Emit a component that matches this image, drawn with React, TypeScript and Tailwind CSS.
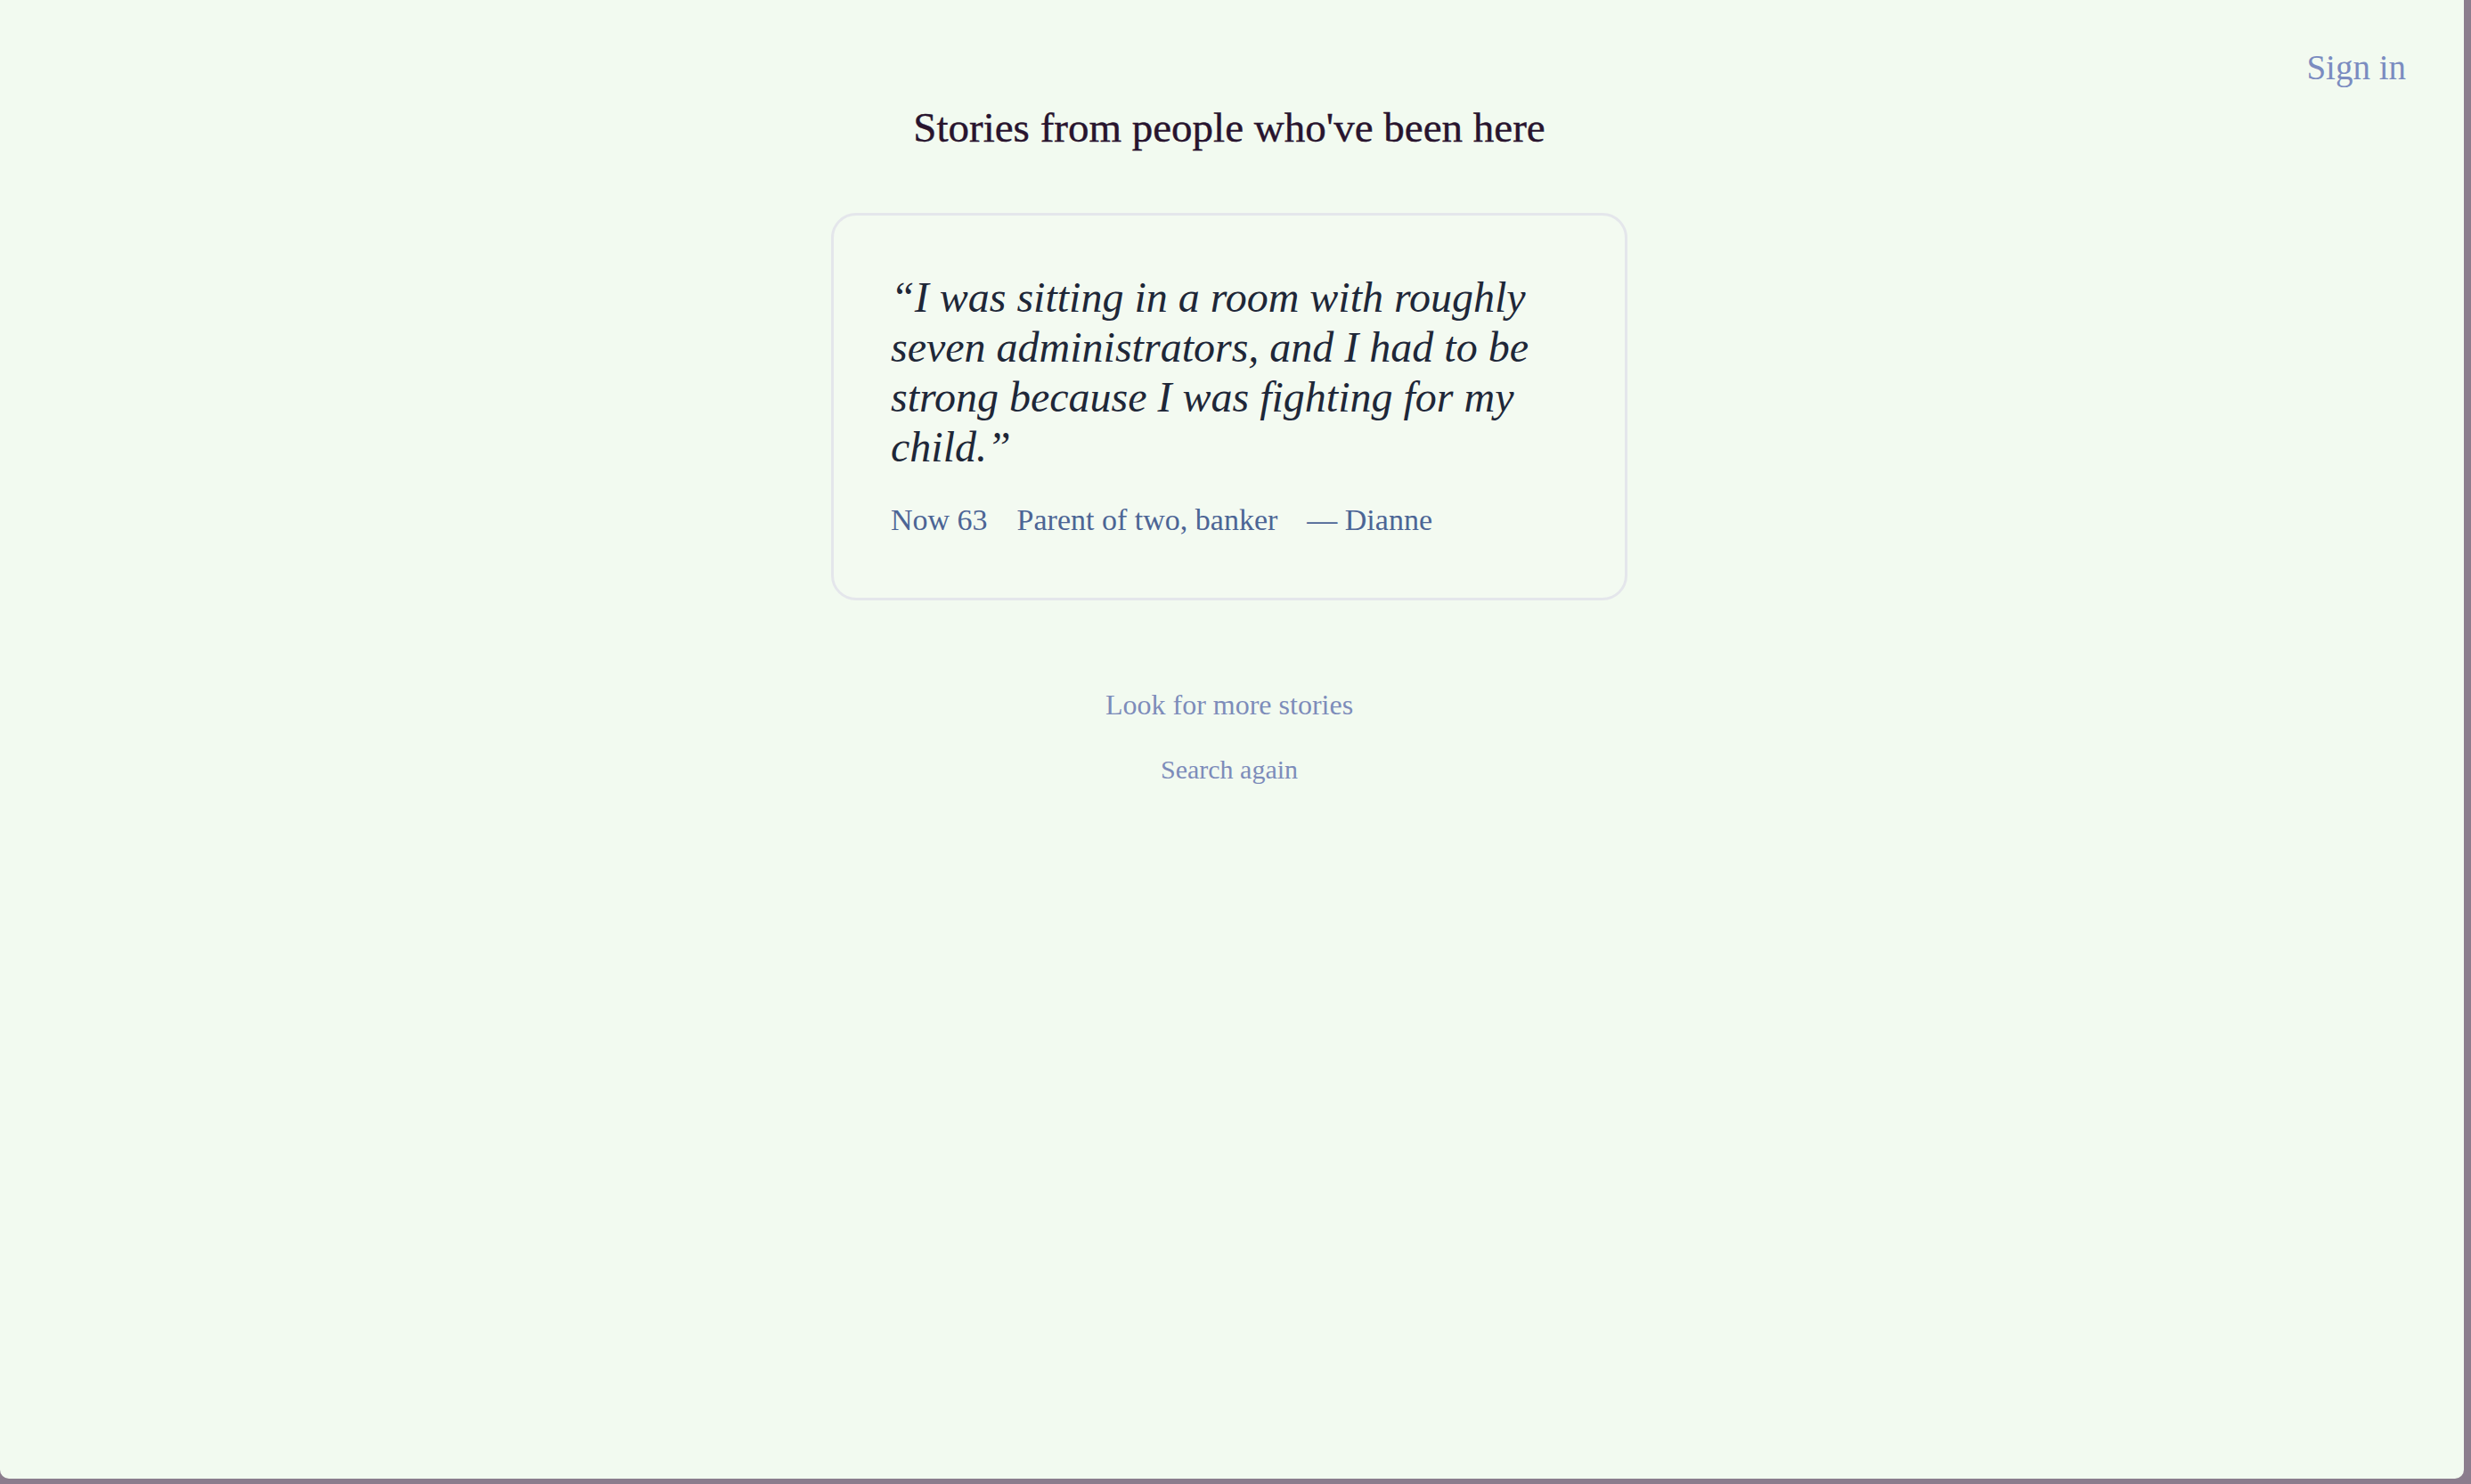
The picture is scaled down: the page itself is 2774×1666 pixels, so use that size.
const SERIF = "font-['Liberation_Serif','Times_New_Roman',serif]";

function StoryCard({
  quote,
  meta,
}: {
  quote: string;
  meta: string[];
}) {
  return (
    <div className="mt-[68px] w-[894px] rounded-[28px] border-[3px] border-[#e4e6eb] bg-[#f3faf1] px-16 pt-16 pb-[65px]">
      <p className="text-[48px] leading-[56px] italic text-[#1e2738]">{quote}</p>
      <div className="mt-8 flex gap-[33px] text-[34px] leading-[44px] text-[#4c6595]">
        {meta.map((m) => (
          <span key={m}>{m}</span>
        ))}
      </div>
    </div>
  );
}

export default function App() {
  return (
    <div className={`h-[1666px] w-[2774px] bg-[#8b7d8d] ${SERIF}`}>
      <div className="flex h-[1660px] w-[2766px] flex-col items-center rounded-b-[10px] bg-[#f2faf0] pr-[6px]">
        <header className="flex h-[100px] w-full justify-end pt-[52px] pr-[59px]">
          <a className="text-[39px] leading-[48px] text-[#7b8cc0]">Sign in</a>
        </header>

        <h1 className="mt-[15px] text-[47px] leading-[56px] text-[#28142e] [-webkit-text-stroke:0.4px_#28142e]">
          Stories from people who've been here
        </h1>

        <StoryCard
          quote={"\u201CI was sitting in a room with roughly seven administrators, and I had to be strong because I was fighting for my child.\u201D"}
          meta={["Now 63", "Parent of two, banker", "\u2014 Dianne"]}
        />

        <a className="mt-[97px] text-[32px] leading-[40px] text-[#7d8cba]">Look for more stories</a>
        <a className="mt-[33px] text-[30px] leading-[40px] text-[#7d8cba]">Search again</a>
      </div>
    </div>
  );
}
